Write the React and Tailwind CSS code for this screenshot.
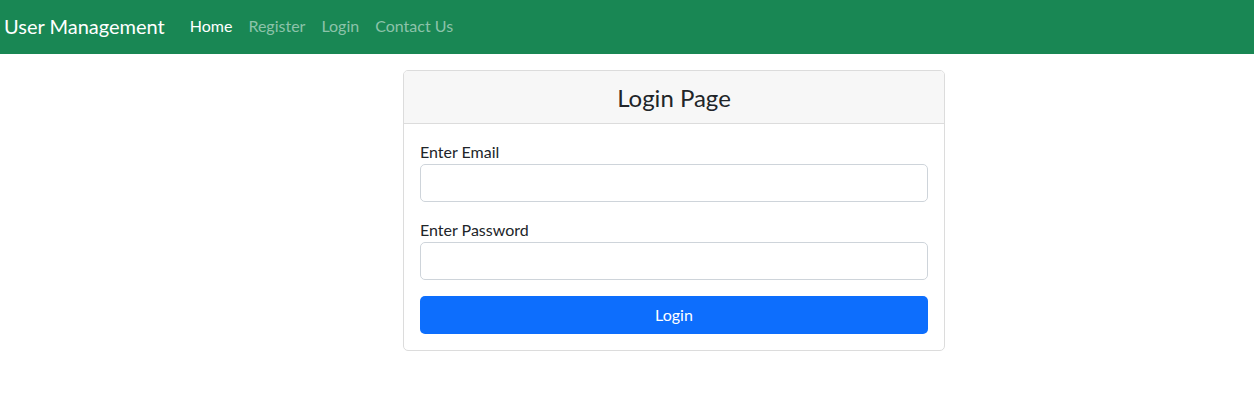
import React, { useState } from "react";

export default function App() {
  const [email, setEmail] = useState("");
  const [password, setPassword] = useState("");

  const links = [
    { name: "Home", active: true },
    { name: "Register" },
    { name: "Login" },
    { name: "Contact Us" },
  ];

  return (
    <div className="min-h-[410px] bg-white text-[#212529] font-['Lato','Liberation_Sans',sans-serif]">
      {/* Navbar */}
      <nav className="h-[54px] bg-[#198754] flex items-center pb-[2px]">
        <a className="ml-[4px] text-[20px] text-white leading-[30px]">User Management</a>
        <ul className="flex ml-[25px] gap-[16px]">
          {links.map((l) => (
            <li key={l.name}>
              <a
                className={
                  "text-[16px] leading-[24px] " +
                  (l.active ? "text-white" : "text-[#8cc3aa]")
                }
              >
                {l.name}
              </a>
            </li>
          ))}
        </ul>
      </nav>

      {/* Login card */}
      <div className="mt-[16px] ml-[403px] w-[542px] border border-[#dcdcdc] rounded-[5px] overflow-hidden">
        <div className="h-[53px] bg-[#f7f7f7] border-b border-[#dcdcdc] flex items-center justify-center">
          <h3 className="text-[24px] leading-[29px] text-[#212529]">Login Page</h3>
        </div>
        <div className="p-[16px]">
          <div className="mb-[16px]">
            <label className="block text-[16px] leading-[24px]">Enter Email</label>
            <input
              type="email"
              value={email}
              onChange={(e) => setEmail(e.target.value)}
              className="block w-full h-[38px] border border-[#ced4da] rounded-[5px] px-3 outline-none"
            />
          </div>
          <div className="mb-[16px]">
            <label className="block text-[16px] leading-[24px]">Enter Password</label>
            <input
              type="password"
              value={password}
              onChange={(e) => setPassword(e.target.value)}
              className="block w-full h-[38px] border border-[#ced4da] rounded-[5px] px-3 outline-none"
            />
          </div>
          <button className="w-full h-[38px] bg-[#0d6efd] text-white text-[16px] rounded-[5px]">
            Login
          </button>
        </div>
      </div>
    </div>
  );
}
